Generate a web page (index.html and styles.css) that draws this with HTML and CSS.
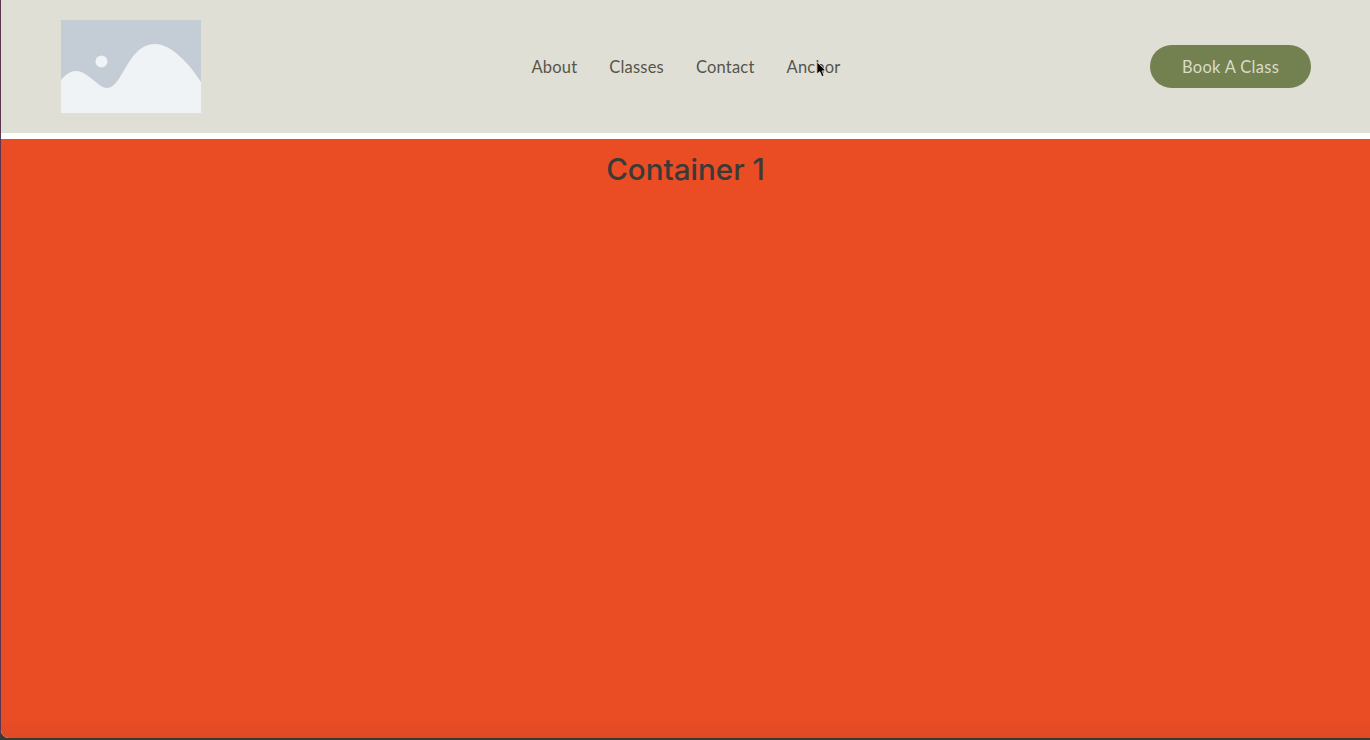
FILE: index.html
```html
<!DOCTYPE html>
<html lang="en">
<head>
    <meta charset="UTF-8">
    <meta name="viewport" content="width=device-width, initial-scale=1.0">
    <title>Book A Class</title>
    <link rel="stylesheet" href="styles.css">
</head>
<body>
    <div class="page">
        <header class="site-header">
            <a class="logo" href="#" aria-label="Logo">
                <svg viewBox="0 0 140 93" width="140" height="93">
                    <rect width="140" height="93" fill="#c4ccd5"/>
                    <circle cx="40.500" cy="41.500" r="6" fill="#eff3f5"/>
                    <path d="M0 60 C5 54 10 51 15 51 C27 51 37 68 46 68 C56 68 62 50 70 39 C77 29 85 24 94 24 C110 24 128 43 140 62 L140 93 L0 93 Z" fill="#eff3f5"/>
                </svg>
            </a>
            <nav class="main-nav">
                <a href="#">About</a>
                <a href="#">Classes</a>
                <a href="#">Contact</a>
                <a href="#">Anchor</a>
            </nav>
            <a class="book-btn" href="#">Book A Class</a>
        </header>
        <section class="container-one">
            <h2>Container 1</h2>
        </section>
    </div>
    <svg class="cursor" viewBox="0 0 12 18" width="12" height="18" aria-hidden="true">
        <path d="M1 1 L1 13 L3.800 10.600 L6 15.500 L8 14.600 L5.900 9.900 L9.500 9.600 Z" fill="#000" stroke="#fff" stroke-width="0.600"/>
    </svg>
</body>
</html>
```

FILE: styles.css
```css
:root {
    --header-bg: #e0dfd5;
    --accent: #ea4c24;
    --olive: #73804f;
    --text: #55554c;
}

html, body {
    height: 100%;
}

body {
    margin: 0;
    position: relative;
    overflow: hidden;
    background: linear-gradient(to bottom, #5c3550 0, #5c3550 730px, #3a3a30 738px);
    font-family: 'Lato', sans-serif;
    color: var(--text);
}

.page {
    height: 738px;
    margin-left: 1px;
    display: flex;
    flex-direction: column;
    background: #fff;
    border-bottom-left-radius: 8px;
    overflow: hidden;
}

.site-header {
    display: grid;
    grid-template-columns: 1fr auto 1fr;
    align-items: center;
    height: 133px;
    padding: 0 59px 0 60px;
    flex-shrink: 0;
    background: var(--header-bg);
}

.logo {
    display: block;
    width: 140px;
    height: 93px;
}

.logo svg {
    display: block;
}

.main-nav {
    display: flex;
    gap: 32px;
}

.main-nav a {
    font-size: 16.500px;
    line-height: 20px;
    letter-spacing: 0.2px;
    color: var(--text);
    text-decoration: none;
}

.book-btn {
    justify-self: end;
    width: 161px;
    height: 43px;
    display: flex;
    align-items: center;
    justify-content: center;
    border-radius: 22px;
    background: var(--olive);
    color: #d9dcc8;
    font-size: 16.500px;
    letter-spacing: 0.3px;
    text-decoration: none;
}

.container-one {
    flex: 1;
    margin-top: 6px;
    padding-top: 11px;
    background: linear-gradient(to bottom, var(--accent) 97%, #dd4a25 100%);
    text-align: center;
}

.container-one h2 {
    margin: 0;
    font-family: 'Inter', sans-serif;
    font-size: 29.600px;
    font-weight: 500;
    line-height: 38px;
    color: #3a3a38;
}

.cursor {
    position: absolute;
    left: 816px;
    top: 61px;
}
```
